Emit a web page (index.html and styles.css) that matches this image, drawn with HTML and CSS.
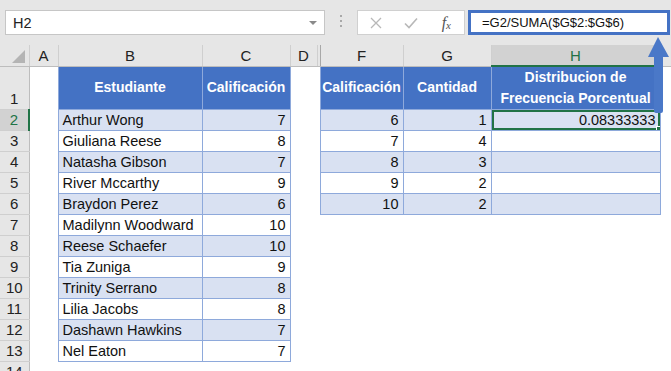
FILE: index.html
```html
<!DOCTYPE html>
<html lang="es">
<head>
  <meta charset="UTF-8">
  <title>Distribucion de Frecuencia Porcentual</title>
  <link rel="stylesheet" href="styles.css">
</head>
<body>
  <div class="topbar">
    <div class="namebox">H2<span class="caret"></span></div>
    <div class="grip"><span></span><span></span><span></span></div>
    <div class="buttons">
      <span class="btn">
        <svg width="12" height="12" viewBox="0 0 12 12"><path d="M1 1L11 11M11 1L1 11" stroke="#b8b8b8" stroke-width="1.3" fill="none"/></svg>
      </span>
      <span class="btn">
        <svg width="14" height="12" viewBox="0 0 14 12"><path d="M1 6.5L5 10.5L13 1.5" stroke="#b8b8b8" stroke-width="1.6" fill="none"/></svg>
      </span>
      <span class="btn fx">f<small>x</small></span>
    </div>
    <div class="formula">=G2/SUMA($G$2:$G$6)</div>
  </div>

  <table class="sheet">
    <colgroup>
      <col class="c-rh"><col class="c-a"><col class="c-b"><col class="c-c"><col class="c-d">
      <col class="c-e"><col class="c-f"><col class="c-g"><col class="c-h"><col class="c-i">
    </colgroup>
    <tr class="colhead">
      <th class="corner"><span class="tri"></span></th>
      <th>A</th><th>B</th><th>C</th><th>D</th><th class="hidden"></th>
      <th>F</th><th>G</th><th class="active">H</th><th></th>
    </tr>
    <tr class="r1">
      <th class="rh">1</th><td></td>
      <td class="th">Estudiante</td><td class="th">Calificación</td>
      <td></td><td></td>
      <td class="th">Calificación</td><td class="th">Cantidad</td>
      <td class="th">Distribucion de<br>Frecuencia Porcentual</td><td></td>
    </tr>
    <tr>
      <th class="rh active">2</th><td></td>
      <td class="t band">Arthur Wong</td><td class="t band n">7</td><td></td><td></td>
      <td class="t band n">6</td><td class="t band n">1</td>
      <td class="t band n sel">0.08333333<span class="handle"></span></td><td></td>
    </tr>
    <tr>
      <th class="rh">3</th><td></td>
      <td class="t">Giuliana Reese</td><td class="t n">8</td><td></td><td></td>
      <td class="t n">7</td><td class="t n">4</td><td class="t"></td><td></td>
    </tr>
    <tr>
      <th class="rh">4</th><td></td>
      <td class="t band">Natasha Gibson</td><td class="t band n">7</td><td></td><td></td>
      <td class="t band n">8</td><td class="t band n">3</td><td class="t band"></td><td></td>
    </tr>
    <tr>
      <th class="rh">5</th><td></td>
      <td class="t">River Mccarthy</td><td class="t n">9</td><td></td><td></td>
      <td class="t n">9</td><td class="t n">2</td><td class="t"></td><td></td>
    </tr>
    <tr>
      <th class="rh">6</th><td></td>
      <td class="t band">Braydon Perez</td><td class="t band n">6</td><td></td><td></td>
      <td class="t band n">10</td><td class="t band n">2</td><td class="t band"></td><td></td>
    </tr>
    <tr>
      <th class="rh">7</th><td></td>
      <td class="t">Madilynn Woodward</td><td class="t n">10</td><td></td><td></td>
      <td></td><td></td><td></td><td></td>
    </tr>
    <tr>
      <th class="rh">8</th><td></td>
      <td class="t band">Reese Schaefer</td><td class="t band n">10</td><td></td><td></td>
      <td></td><td></td><td></td><td></td>
    </tr>
    <tr>
      <th class="rh">9</th><td></td>
      <td class="t">Tia Zuniga</td><td class="t n">9</td><td></td><td></td>
      <td></td><td></td><td></td><td></td>
    </tr>
    <tr>
      <th class="rh">10</th><td></td>
      <td class="t band">Trinity Serrano</td><td class="t band n">8</td><td></td><td></td>
      <td></td><td></td><td></td><td></td>
    </tr>
    <tr>
      <th class="rh">11</th><td></td>
      <td class="t">Lilia Jacobs</td><td class="t n">8</td><td></td><td></td>
      <td></td><td></td><td></td><td></td>
    </tr>
    <tr>
      <th class="rh">12</th><td></td>
      <td class="t band">Dashawn Hawkins</td><td class="t band n">7</td><td></td><td></td>
      <td></td><td></td><td></td><td></td>
    </tr>
    <tr>
      <th class="rh">13</th><td></td>
      <td class="t">Nel Eaton</td><td class="t n">7</td><td></td><td></td>
      <td></td><td></td><td></td><td></td>
    </tr>
    <tr>
      <th class="rh">14</th><td></td><td></td><td></td><td></td><td></td>
      <td></td><td></td><td></td><td></td>
    </tr>
  </table>

  <!-- arrow pointing at the formula bar -->
  <svg class="arrow" width="28" height="80" viewBox="0 0 28 80">
    <path d="M13 0L24 20L18 20L18 74Q18 76 16 76L11 76Q9 76 9 74L9 20L3 20Z" fill="#4a78c8"/>
  </svg>
</body>
</html>
```

FILE: styles.css
```css
body {
  margin: 0;
  background: #fff;
  font-family: "Liberation Sans", Arial, sans-serif;
  color: #111;
  overflow: hidden;
  position: relative;
}

/* formula bar */
.topbar {
  height: 45px;
  box-sizing: border-box;
  padding-top: 10px;
  background: #e6e6e6;
  display: flex;
  align-items: flex-start;
}

.namebox {
  margin-left: 5px;
  width: 320px;
  height: 25px;
  box-sizing: border-box;
  padding: 0 7px;
  background: #fff;
  border: 1px solid #c6c6c6;
  display: flex;
  align-items: center;
  justify-content: space-between;
  font-size: 14.5px;
  color: #222;
}

.caret {
  width: 0;
  height: 0;
  border-left: 4px solid transparent;
  border-right: 4px solid transparent;
  border-top: 4px solid #8a8a8a;
}

.grip {
  width: 32px;
  padding-top: 5px;
  display: flex;
  flex-direction: column;
  align-items: center;
  gap: 3px;
}

.grip span {
  width: 2px;
  height: 2px;
  background: #a8a8a8;
}

.buttons {
  width: 108px;
  height: 25px;
  box-sizing: border-box;
  background: #fff;
  border: 1px solid #d0d0d0;
  display: flex;
  align-items: center;
}

.btn {
  width: 36px;
  display: flex;
  justify-content: center;
  align-items: center;
}

.fx {
  font-family: "Liberation Serif", serif;
  font-style: italic;
  font-size: 16px;
  color: #555;
}

.fx small {
  font-size: 11px;
  margin-top: 4px;
}

.formula {
  margin-left: 3px;
  width: 202px;
  height: 25px;
  box-sizing: border-box;
  padding-left: 11px;
  background: #fff;
  border: 3px solid #4472c4;
  display: flex;
  align-items: center;
  font-size: 13px;
  color: #111;
}

/* sheet */
.sheet {
  table-layout: fixed;
  width: 700px;
  border-collapse: collapse;
  font-size: 14.5px;
}

.c-rh { width: 29px; }
.c-a { width: 29px; }
.c-b { width: 144px; }
.c-c { width: 88px; }
.c-d { width: 27px; }
.c-e { width: 3px; }
.c-f { width: 83px; }
.c-g { width: 88px; }
.c-h { width: 169px; }
.c-i { width: 40px; }

.sheet td, .sheet th {
  padding: 0 4px;
  height: 20px;
  white-space: nowrap;
  overflow: hidden;
}

.colhead th {
  height: 20px;
  padding: 0;
  background: #e6e6e6;
  border-right: 1px solid #cfcfcf;
  border-bottom: 1px solid #bdbdbd;
  font-weight: normal;
  font-size: 15px;
  color: #222;
}

.colhead th.hidden {
  border-left: 1px solid #a8a8a8;
  border-right: 1px solid #a8a8a8;
}

.colhead th.active {
  background: #d2d2d2;
  color: #217346;
  border-bottom: 2px solid #217346;
}

.corner {
  position: relative;
}

.tri {
  position: absolute;
  right: 4px;
  bottom: 3px;
  width: 0;
  height: 0;
  border-left: 13px solid transparent;
  border-bottom: 13px solid #b4b4b4;
}

.rh {
  padding: 0;
  background: #e6e6e6;
  border-right: 1px solid #bdbdbd;
  border-bottom: 1px solid #cfcfcf;
  font-weight: normal;
  font-size: 15px;
  color: #222;
  vertical-align: bottom;
  line-height: 20px;
}

.rh.active {
  background: #d2d2d2;
  color: #217346;
  border-right: 2px solid #217346;
}

.r1 td, .r1 th {
  height: 41px;
}

.sheet .th {
  padding: 0;
  background: #4472c4;
  color: #fff;
  font-size: 14px;
  font-weight: bold;
  text-align: center;
  border: 1px solid #8ea9db;
  line-height: 21px;
}

.t {
  border: 1px solid #8ea9db;
  background: #fff;
}

.t.band {
  background: #d9e1f2;
}

.n {
  text-align: right;
}

.sel {
  position: relative;
  box-shadow: inset 0 0 0 2px #217346;
}

.handle {
  position: absolute;
  right: -3px;
  bottom: -3px;
  width: 5px;
  height: 5px;
  background: #217346;
  border: 1px solid #fff;
}

.arrow {
  position: absolute;
  left: 645px;
  top: 37px;
}
```
